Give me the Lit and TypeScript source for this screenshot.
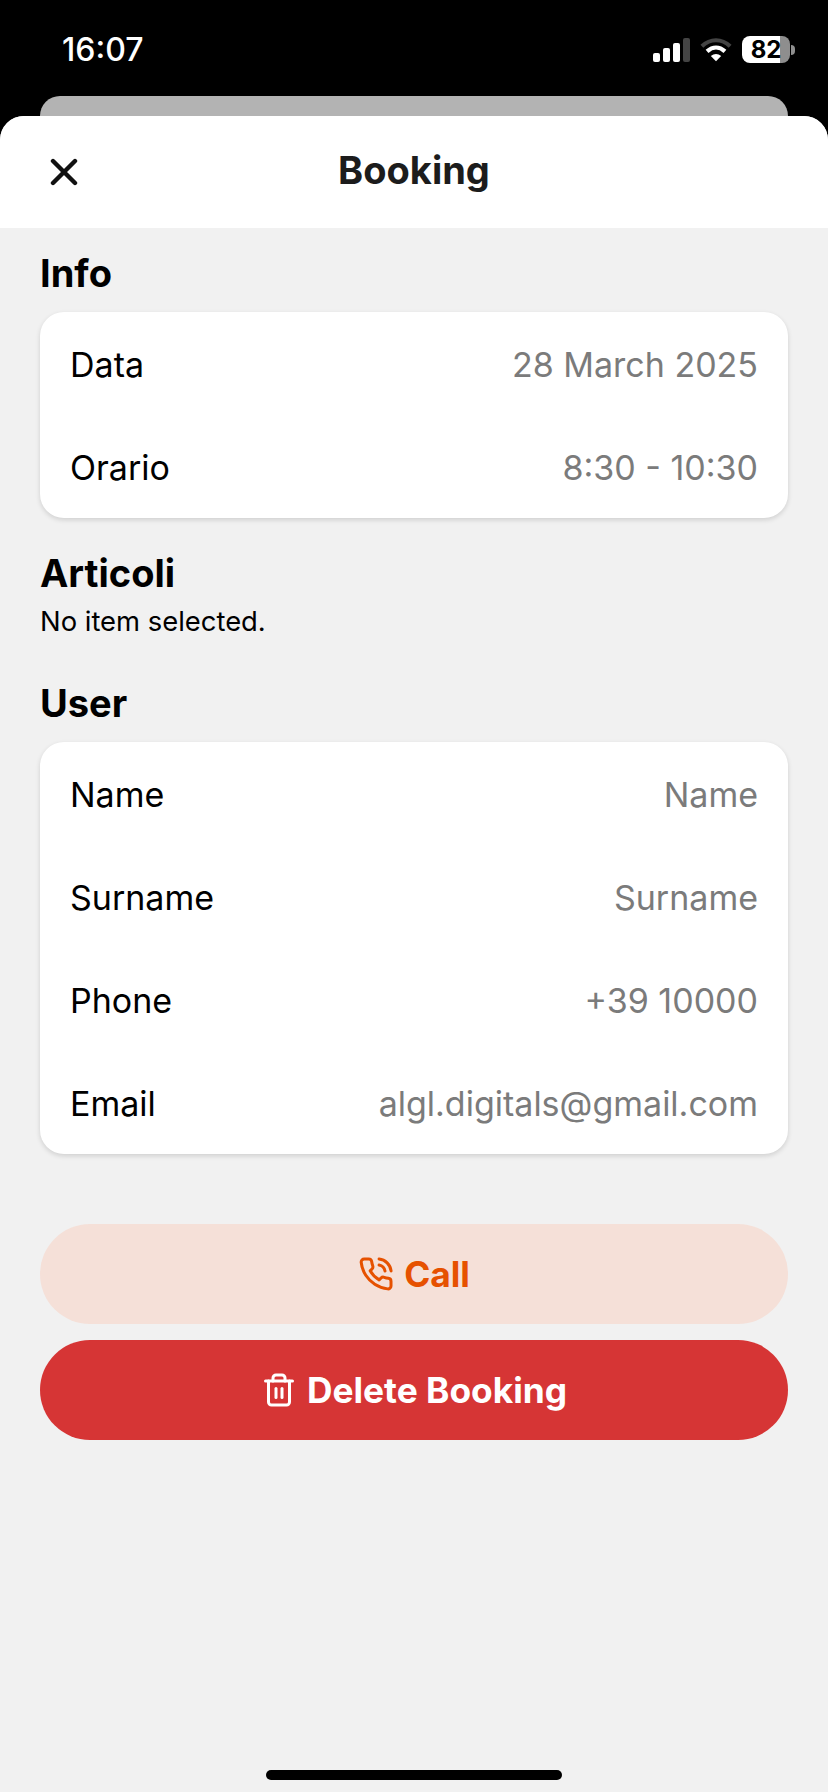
import { LitElement, html, css } from "lit";
import { customElement } from "lit/decorators.js";

@customElement("app-root")
export class AppRoot extends LitElement {
  static styles = css`
    :host { display: block; width: 828px; height: 1792px; background: #000; font-family: Inter, "Liberation Sans", sans-serif; overflow: hidden; }
    .status { height: 96px; box-sizing: border-box; padding: 0 33px 0 62px; display: flex; justify-content: space-between; align-items: flex-start; color: #fff; }
    .time { font-size: 32px; font-weight: 500; line-height: 38px; margin-top: 31px; }
    .sys { display: flex; align-items: center; margin-top: 36px; }
    .sys svg { display: block; }
    .wifi { margin-left: 10px; }
    .batt { margin-left: 10px; width: 48px; height: 27px; border-radius: 8px; background: linear-gradient(90deg, #fff 0 79%, #8e8e8e 79%); color: #000; font-size: 24px; font-weight: 700; line-height: 27px; text-align: center; }
    .nub { width: 4px; height: 10px; background: #8e8e8e; border-radius: 0 4px 4px 0; margin-left: 1px; }
    .peek { height: 20px; margin: 0 40px; background: #b3b3b3; border-radius: 20px 20px 0 0; }
    .sheet { height: 1676px; background: #f1f1f1; border-radius: 24px 24px 0 0; overflow: hidden; position: relative; }
    .bar { height: 112px; background: #fff; display: flex; align-items: center; justify-content: center; position: relative; }
    .bar h1 { margin: 0 0 4px; font-size: 38px; font-weight: 700; color: #1c1c1c; line-height: 46px; }
    .close { position: absolute; left: 50px; top: 42px; display: block; }
    .content { padding: 0 40px; }
    h2 { margin: 0; font-size: 38px; font-weight: 700; color: #000; line-height: 46px; }
    .h-info { padding-top: 22px; margin-bottom: 16px; }
    .h-art { margin-top: 32px; }
    .none { font-size: 27.4px; line-height: 34px; color: #000; margin-top: 8px; }
    .h-user { margin-top: 42px; margin-bottom: 16px; }
    .card { background: #fff; border-radius: 24px; box-shadow: 0 2px 5px rgba(0,0,0,.14); }
    .row { height: 103px; box-sizing: border-box; padding: 1px 30px 0; display: flex; justify-content: space-between; align-items: center; font-size: 34px; color: #000; }
    .row .v { color: #7b7b7b; }
    .actions { margin-top: 70px; display: flex; flex-direction: column; gap: 16px; }
    .btn { height: 100px; border-radius: 50px; display: flex; align-items: center; justify-content: center; gap: 10px; font-size: 35.3px; font-weight: 700; }
    .call { background: #f5e0d8; color: #e65100; }
    .del { background: #d63535; color: #fff; }
    .home { position: absolute; left: 266px; bottom: 12px; width: 296px; height: 10px; border-radius: 5px; background: #000; }
  `;

  row(k: string, v: string) {
    return html`<div class="row"><span>${k}</span><span class="v">${v}</span></div>`;
  }

  render() {
    return html`
      <div class="status">
        <div class="time">16:07</div>
        <div class="sys">
          <svg width="37" height="24" viewBox="0 0 37 24">
            <rect x="0" y="15" width="7" height="9" rx="2" fill="#fff"/>
            <rect x="10" y="10" width="7" height="14" rx="2" fill="#fff"/>
            <rect x="20" y="5" width="7" height="19" rx="2" fill="#fff"/>
            <rect x="30" y="0" width="7" height="24" rx="2" fill="#444"/>
          </svg>
          <svg class="wifi" width="32" height="25" viewBox="0 0 34 26" fill="none">
            <path d="M2 9.5C11 1 23 1 32 9.5" stroke="#444" stroke-width="4.4"/>
            <path d="M7.5 15C13.5 9.5 20.5 9.5 26.5 15" stroke="#fff" stroke-width="4.4"/>
            <path d="M11.5 20L17 25.5L22.5 20C19 17 15 17 11.5 20Z" fill="#fff"/>
          </svg>
          <div class="batt">82</div>
          <div class="nub"></div>
        </div>
      </div>
      <div class="peek"></div>
      <div class="sheet">
        <div class="bar">
          <svg class="close" width="28" height="28" viewBox="0 0 28 28" fill="none"><path d="M3 3L25 25M25 3L3 25" stroke="#111" stroke-width="4.4" stroke-linecap="round"/></svg>
          <h1>Booking</h1>
        </div>
        <div class="content">
          <h2 class="h-info">Info</h2>
          <div class="card">
            ${this.row("Data", "28 March 2025")}
            ${this.row("Orario", "8:30 - 10:30")}
          </div>
          <h2 class="h-art">Articoli</h2>
          <div class="none">No item selected.</div>
          <h2 class="h-user">User</h2>
          <div class="card">
            ${this.row("Name", "Name")}
            ${this.row("Surname", "Surname")}
            ${this.row("Phone", "+39 10000")}
            ${this.row("Email", "algl.digitals@gmail.com")}
          </div>
          <div class="actions">
            <div class="btn call">
              <svg width="36" height="36" viewBox="0 0 24 24" fill="none" stroke="#e65100" stroke-width="2" stroke-linecap="round" stroke-linejoin="round">
                <path d="M14.05 2a9 9 0 0 1 8 7.94"/><path d="M14.05 6A5 5 0 0 1 18 10"/>
                <path d="M22 16.92v3a2 2 0 0 1-2.18 2 19.79 19.79 0 0 1-8.63-3.07 19.5 19.5 0 0 1-6-6 19.79 19.79 0 0 1-3.07-8.67A2 2 0 0 1 4.11 2h3a2 2 0 0 1 2 1.72 12.84 12.84 0 0 0 .7 2.81 2 2 0 0 1-.45 2.11L8.09 9.91a16 16 0 0 0 6 6l1.27-1.27a2 2 0 0 1 2.11-.45 12.84 12.84 0 0 0 2.81.7A2 2 0 0 1 22 16.92z"/>
              </svg>
              <span>Call</span>
            </div>
            <div class="btn del">
              <svg width="36" height="36" viewBox="0 0 24 24" fill="none" stroke="#fff" stroke-width="2" stroke-linecap="round" stroke-linejoin="round">
                <path d="M3 6h18"/><path d="M5 6v14a2 2 0 0 0 2 2h10a2 2 0 0 0 2-2V6"/><path d="M8 6V4a2 2 0 0 1 2-2h4a2 2 0 0 1 2 2v2"/><path d="M10 11v6"/><path d="M14 11v6"/>
              </svg>
              <span>Delete Booking</span>
            </div>
          </div>
        </div>
        <div class="home"></div>
      </div>
    `;
  }
}
